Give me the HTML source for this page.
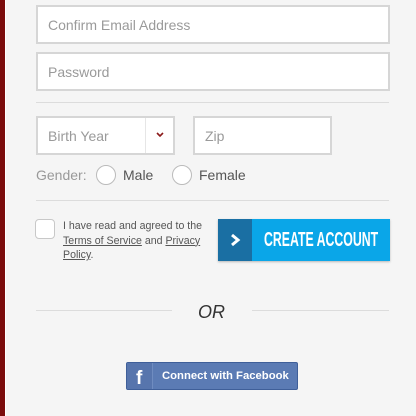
<!DOCTYPE html>
<html><head><style>
*{box-sizing:border-box;margin:0;padding:0}
body{width:416px;height:416px;background:#f5f5f5;position:relative;overflow:hidden;font-family:"Liberation Sans",Arial,sans-serif}
.bar{position:absolute;left:0;top:0;width:5px;height:416px;background:#7b0c0c}
.bar2{position:absolute;left:5px;top:0;width:1px;height:416px;background:#fff}
.in{position:absolute;background:#fff;border:2px solid #d6d6d6;color:#9a9a9a;font-size:14px;padding-left:10px;display:flex;align-items:center}
.hr{position:absolute;height:1px;background:#dcdcdc}
.rad{position:absolute;width:20px;height:20px;border:1px solid #bbb;border-radius:50%;background:#fff}
.t{position:absolute;font-size:14px;color:#555}
</style></head><body>
<div class="bar"></div><div class="bar2"></div>
<div class="in" style="left:36px;top:5px;width:354px;height:39px">Confirm Email Address</div>
<div class="in" style="left:36px;top:52px;width:354px;height:39px">Password</div>
<div class="hr" style="left:36px;top:102px;width:353px"></div>
<div class="in" style="left:36px;top:116px;width:139px;height:39px">Birth Year</div>
<div style="position:absolute;left:145px;top:118px;width:1px;height:35px;background:#e6e6e6"></div>
<svg style="position:absolute;left:155px;top:131px" width="10" height="8"><path d="M2 2 L5 5 L8 2" stroke="#8b1a1a" stroke-width="1.6" fill="none"/></svg>
<div class="in" style="left:193px;top:116px;width:139px;height:39px">Zip</div>
<div class="t" style="left:36px;top:167px;color:#999">Gender:</div>
<div class="rad" style="left:96px;top:165px"></div>
<div class="t" style="left:123px;top:167px">Male</div>
<div class="rad" style="left:172px;top:165px"></div>
<div class="t" style="left:199px;top:167px">Female</div>
<div class="hr" style="left:36px;top:200px;width:353px"></div>
<div style="position:absolute;left:35px;top:219px;width:20px;height:20px;border:1px solid #c8c8c8;border-radius:4px;background:#fff"></div>
<div style="position:absolute;left:63px;top:219px;font-size:10.6px;line-height:14.5px;color:#555">I have read and agreed to the<br><u>Terms of Service</u> and <u>Privacy</u><br><u>Policy</u>.</div>
<div style="position:absolute;left:218px;top:219px;width:172px;height:42px;background:#0aa6e8;box-shadow:0 1px 2px rgba(0,0,0,.25)">
<div style="position:absolute;left:0;top:0;width:34px;height:42px;background:#1a6fa3"></div>
<svg style="position:absolute;left:11px;top:14px" width="12" height="14"><path d="M3 2 L9 7 L3 12" stroke="#fff" stroke-width="3" fill="none"/></svg>
<div style="position:absolute;left:46px;top:10px;color:#fff;font-size:20px;line-height:22px;font-weight:bold;transform:scaleX(.615);transform-origin:0 0;white-space:nowrap">CREATE ACCOUNT</div>
</div>
<div class="hr" style="left:36px;top:310px;width:136px"></div>
<div class="hr" style="left:252px;top:310px;width:137px"></div>
<div style="position:absolute;left:198px;top:302px;font-size:18px;font-style:italic;color:#333">OR</div>
<div style="position:absolute;left:126px;top:362px;width:172px;height:28px;background:#5b7bb4;border:1px solid #3f5f99;border-radius:2px">
<div style="position:absolute;left:0;top:0;width:26px;height:26px;background:#5775ad;border-right:1px solid #6f8cc0"></div>
<div style="position:absolute;left:9px;top:5px;color:#fff;font-weight:bold;font-size:19px;line-height:22px">f</div>
<div style="position:absolute;left:35px;top:6px;color:#fff;font-weight:bold;font-size:11.3px;line-height:14px;white-space:nowrap">Connect with Facebook</div>
</div>
</body></html>
